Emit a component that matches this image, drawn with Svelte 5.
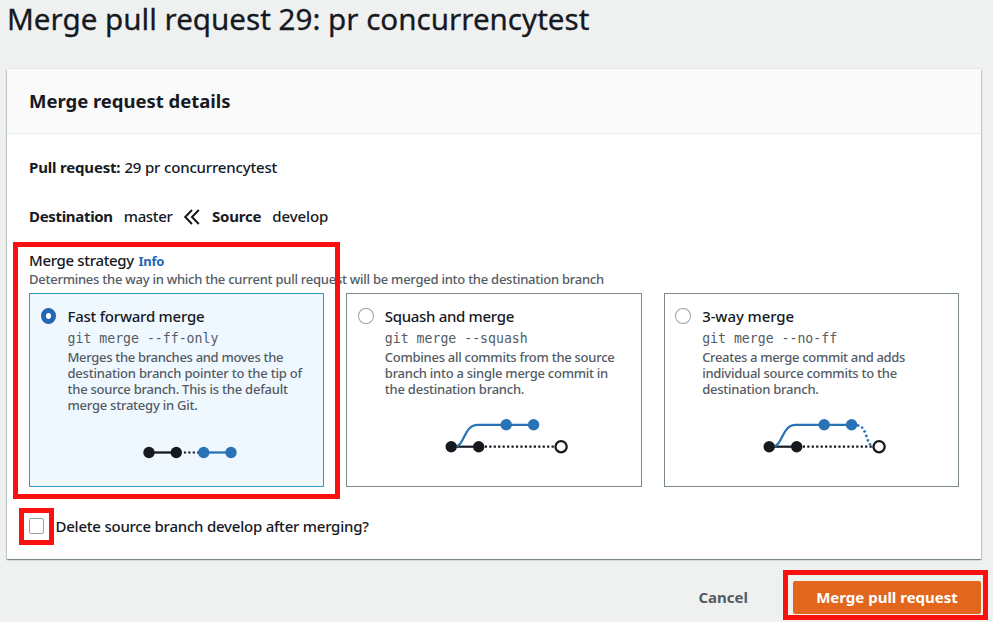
<script>
  let selected = $state('ff');
  let removeBranch = $state(false);

  const strategies = [
    {
      id: 'ff',
      title: 'Fast forward merge',
      command: 'git merge --ff-only',
      lines: [
        'Merges the branches and moves the',
        'destination branch pointer to the tip of',
        'the source branch. This is the default',
        'merge strategy in Git.'
      ]
    },
    {
      id: 'squash',
      title: 'Squash and merge',
      command: 'git merge --squash',
      lines: [
        'Combines all commits from the source',
        'branch into a single merge commit in',
        'the destination branch.'
      ]
    },
    {
      id: 'three',
      title: '3-way merge',
      command: 'git merge --no-ff',
      lines: [
        'Creates a merge commit and adds',
        'individual source commits to the',
        'destination branch.'
      ]
    }
  ];
</script>

<main>
  <h1><span class="t-title">Merge pull request 29: pr concurrencytest</span></h1>

  <section class="panel">
    <header><h2><span class="t-head">Merge request details</span></h2></header>
    <div class="body">
      <p class="row pull"><b class="t-pr">Pull request:</b><span class="t-prv">29 pr concurrencytest</span></p>
      <p class="row branches">
        <b class="t-dest">Destination</b>
        <span class="t-master">master</span>
        <svg class="chev" width="18" height="18" viewBox="0 0 18 18">
          <path d="M9 2 2.200 9 9 16M15.800 2 9 9l6.800 7" fill="none" stroke="#16191f" stroke-width="2" />
        </svg>
        <b class="t-src">Source</b>
        <span class="t-dev">develop</span>
      </p>

      <div class="label"><span class="t-strat">Merge strategy</span><a class="t-info" href="#info">Info</a></div>
      <div class="hint"><span class="t-hint">Determines the way in which the current pull request will be merged into the destination branch</span></div>

      <div class="tiles">
        {#each strategies as s (s.id)}
          <button class="tile" class:active={selected === s.id} onclick={() => (selected = s.id)}>
            <span class="radio"></span>
            <span class="copy">
              <span class="name n-{s.id}">{s.title}</span>
              <code>{s.command}</code>
              {#each s.lines as line, i}
                <span class="line l-{s.id}{i}">{line}</span>
              {/each}
            </span>
            {#if s.id === 'ff'}
              <svg class="graph" width="293" height="60" viewBox="0 0 293 60">
                <path d="M119 38.500h27.500" stroke="#16191f" stroke-width="2.300" />
                <path d="M153.900 38.500h15" stroke="#16191f" stroke-width="2.200" stroke-dasharray="2.200 2.200" />
                <path d="M173.700 38.500h27.500" stroke="#2872b5" stroke-width="2.300" />
                <circle cx="119" cy="38.500" r="5.700" fill="#16191f" />
                <circle cx="146.300" cy="38.500" r="5.700" fill="#16191f" />
                <circle cx="173.700" cy="38.500" r="5.700" fill="#2872b5" />
                <circle cx="201" cy="38.500" r="5.700" fill="#2872b5" />
              </svg>
            {:else}
              <svg class="graph" width="293" height="60" viewBox="0 0 293 60">
                <path d="M104.200 32.700h27.500" stroke="#16191f" stroke-width="2.200" />
                <path d="M137.800 32.700h70" stroke="#16191f" stroke-width="2.200" stroke-dasharray="2.200 2.250" />
                <path d="M107 32.700C118.500 32.700 116 10.800 131 10.800H187" fill="none" stroke="#2872b5" stroke-width="2.200" />
                {#if s.id === 'three'}
                  <path d="M192 11.300C203 12 200 31.500 209 32.700" fill="none" stroke="#2872b5" stroke-width="2.400" stroke-dasharray="2.300 2.300" />
                {/if}
                <circle cx="104.200" cy="32.700" r="5.700" fill="#16191f" />
                <circle cx="131.700" cy="32.700" r="5.700" fill="#16191f" />
                <circle cx="159.200" cy="10.800" r="5.700" fill="#2872b5" />
                <circle cx="186.600" cy="10.800" r="5.700" fill="#2872b5" />
                <circle cx="214.100" cy="32.700" r="5.600" fill="#fff" stroke="#16191f" stroke-width="2.300" />
              </svg>
            {/if}
          </button>
        {/each}
      </div>

      <label class="remove">
        <input type="checkbox" bind:checked={removeBranch} />
        <span class="t-del">Delete source branch develop after merging?</span>
      </label>
    </div>
  </section>

  <footer>
    <button class="cancel"><span class="t-cancel">Cancel</span></button>
    <button class="submit"><span class="t-submit">Merge pull request</span></button>
  </footer>

  <div class="mark mark-strategy"></div>
  <div class="mark mark-check"></div>
  <div class="mark mark-submit"></div>
</main>

<style>
  :global(body) { margin: 0; background: #eff1f1; }
  main {
    position: relative;
    box-sizing: border-box;
    width: 993px;
    height: 622px;
    overflow: hidden;
    padding: 0 12px 0 7px;
    background: #eff1f1;
    color: #16191f;
    font: 500 15px/20px "Noto Sans", "Open Sans", sans-serif;
    white-space: nowrap;
  }
  h1, h2, p { margin: 0; }
  h1 { height: 69px; font-size: 29.600px; font-weight: 400; line-height: 38px; -webkit-text-stroke: 0.300px #16191f; }
  .panel {
    box-sizing: border-box;
    width: 974px;
    height: 490px;
    background: #fff;
    box-shadow: 0 1px 1px 0 rgba(0, 28, 36, 0.3), 1px 1px 1px 0 rgba(0, 28, 36, 0.15), -1px 1px 1px 0 rgba(0, 28, 36, 0.15), 0 -1px 0 #e2e5e5;
  }
  header { box-sizing: border-box; height: 65px; padding: 20px 22px; background: #fafafa; border-bottom: 1px solid #eaeded; }
  h2 { font-size: 18.500px; line-height: 24px; font-weight: 700; letter-spacing: -0.030px; }
  .body { padding: 0 22px; }
  .row { display: flex; align-items: center; height: 20px; }
  .pull { padding-top: 23px; gap: 4px; }
  .t-pr { letter-spacing: -0.180px; }
  .t-prv { letter-spacing: -0.170px; }
  .branches { padding-top: 29px; }
  .t-dest { letter-spacing: -0.320px; }
  .t-master { margin-left: 11px; letter-spacing: -0.360px; }
  .chev { margin: 1px 11px 0 10.500px; }
  .t-src { letter-spacing: -0.200px; }
  .t-dev { margin-left: 11px; letter-spacing: -0.100px; }
  .label { display: flex; gap: 4.500px; margin-top: 24px; height: 20px; }
  .t-strat { letter-spacing: -0.340px; }
  .label a { color: #1f66b5; font-size: 13px; line-height: 22px; font-weight: 700; text-decoration: none; letter-spacing: -0.250px; }
  .hint { height: 23px; font-size: 13px; line-height: 19px; color: #545b64; letter-spacing: -0.252px; }
  .tiles { display: grid; grid-template-columns: repeat(3, 1fr); gap: 22px; height: 194px; }
  button { font: inherit; color: inherit; cursor: pointer; }
  .tile {
    display: grid;
    grid-template-columns: 37.500px 1fr;
    grid-template-rows: 120px 60px;
    align-content: start;
    box-sizing: border-box;
    min-width: 0;
    padding: 0;
    background: #fff;
    border: 1px solid #7b898b;
    text-align: left;
  }
  .tile.active { background: #f0f8ff; border-color: #3498c4; }
  .radio { box-sizing: border-box; width: 15.500px; height: 16px; margin: 14px 0 0 10.800px; border: 1px solid #95a5a6; border-radius: 50%; background: #fff; }
  .active .radio { border: 5px solid #2467b4; }
  .copy { display: flex; flex-direction: column; align-items: flex-start; padding-top: 12px; }
  .name { line-height: 20px; }
  .n-ff { letter-spacing: -0.240px; }
  .n-squash { letter-spacing: -0.320px; }
  .n-three { letter-spacing: -0.090px; }
  code { font: 13.200px/26px "DejaVu Sans Mono", monospace; height: 23px; color: #545b64; }
  .line { font-size: 13px; line-height: 16px; color: #545b64; }
  .l-ff0 { letter-spacing: -0.320px; }
  .l-ff1 { letter-spacing: -0.200px; }
  .l-ff2 { letter-spacing: -0.240px; }
  .l-ff3 { letter-spacing: -0.240px; }
  .l-squash0 { letter-spacing: -0.270px; }
  .l-squash1 { letter-spacing: -0.260px; }
  .l-squash2 { letter-spacing: -0.240px; }
  .l-three0 { letter-spacing: -0.330px; }
  .l-three1 { letter-spacing: -0.260px; }
  .l-three2 { letter-spacing: -0.230px; }
  .graph { grid-column: 1 / 3; }
  .remove { display: flex; align-items: center; gap: 11.500px; height: 20px; margin-top: 29px; letter-spacing: -0.230px; }
  input { appearance: none; box-sizing: border-box; width: 15px; height: 16px; margin: 0; border: 1px solid #95a5a6; border-radius: 2px; background: #fff; }
  footer { display: flex; justify-content: flex-end; align-items: center; padding-top: 22px; }
  footer button { font-weight: 700; border: 0; }
  .cancel { padding: 0 0 2px; margin-right: 45px; background: none; color: #545b64; }
  .submit { width: 188px; height: 33px; padding: 0 0 2px; border-radius: 2px; background: #e2661b; color: #fff; }
  .mark { position: absolute; box-sizing: border-box; border: 5px solid #fb1010; pointer-events: none; }
  .mark-strategy { left: 13px; top: 242px; width: 327px; height: 257px; }
  .mark-check { left: 19px; top: 508px; width: 35px; height: 37px; }
  .mark-submit { left: 783px; top: 570px; width: 205px; height: 50px; }
</style>
